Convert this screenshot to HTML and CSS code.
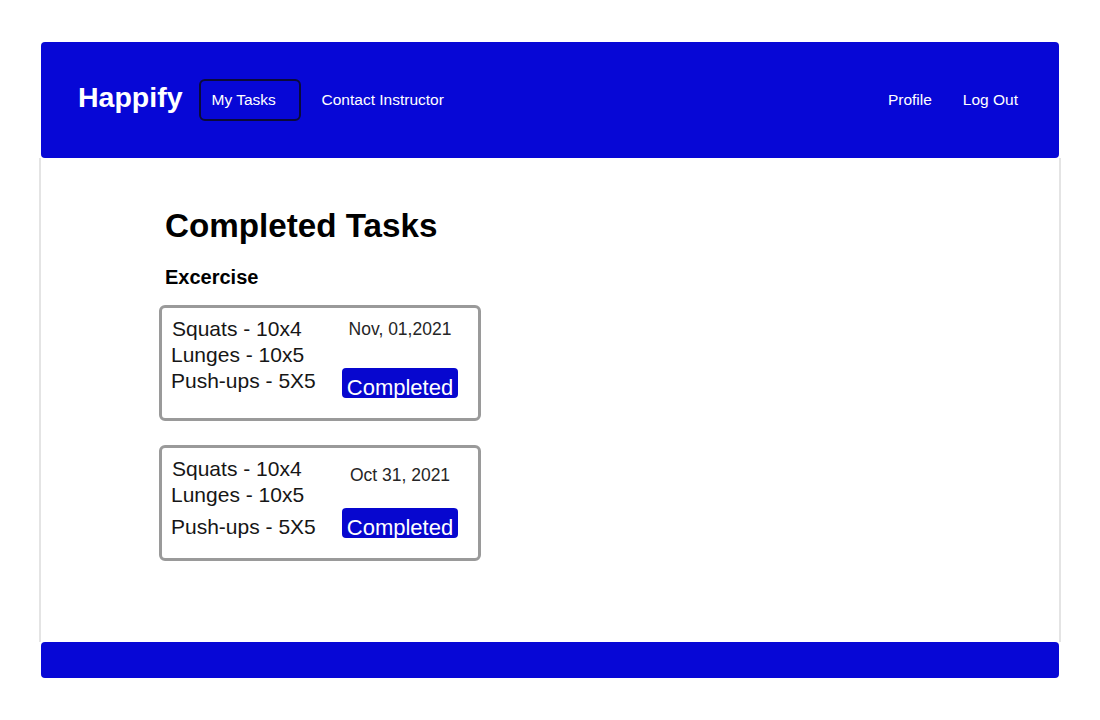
FILE: index.html
```html
<!DOCTYPE html>
<html lang="en">
<head>
<meta charset="utf-8">
<title>Happify - Completed Tasks</title>
<link rel="stylesheet" href="styles.css">
</head>
<body>
<div class="page">
  <header class="topbar">
    <div class="brand">Happify</div>
    <nav class="nav-left">
      <a class="nav-link nav-active" href="#">My Tasks</a>
      <a class="nav-link" href="#">Contact Instructor</a>
    </nav>
    <nav class="nav-right">
      <a class="nav-link" href="#">Profile</a>
      <a class="nav-link" href="#">Log Out</a>
    </nav>
  </header>
  <main class="content">
    <h1 class="title">Completed Tasks</h1>
    <h2 class="section">Excercise</h2>
    <div class="cards">
      <div class="card">
        <div class="card-list">
          <div class="item item-first">Squats - 10x4</div>
          <div class="item">Lunges - 10x5</div>
          <div class="item">Push-ups - 5X5</div>
        </div>
        <div class="card-side">
          <div class="date">Nov, 01,2021</div>
          <div class="badge">Completed</div>
        </div>
      </div>
      <div class="card">
        <div class="card-list">
          <div class="item item-first">Squats - 10x4</div>
          <div class="item">Lunges - 10x5</div>
          <div class="item item-spaced">Push-ups - 5X5</div>
        </div>
        <div class="card-side card-side-low">
          <div class="date">Oct 31, 2021</div>
          <div class="badge">Completed</div>
        </div>
      </div>
    </div>
  </main>
  <footer class="bottombar"></footer>
</div>
</body>
</html>
```

FILE: styles.css
```css
* { box-sizing: border-box; }
html, body { margin: 0; padding: 0; background: #ffffff; }
body {
  font-family: "Liberation Sans", Arial, sans-serif;
  color: #000;
}
.page {
  padding: 42px 41px;
}
.topbar {
  height: 116px;
  background: #0707d6;
  border-radius: 4px;
  display: flex;
  align-items: center;
  padding: 0 41px 0 37px;
  color: #fff;
}
.brand {
  font-size: 28.5px;
  font-weight: bold;
  margin-right: 16px;
  margin-top: -6px;
}
.nav-left, .nav-right {
  display: flex;
  align-items: center;
}
.nav-left { gap: 21px; }
.nav-right { margin-left: auto; gap: 31px; }
.nav-link {
  color: #fff;
  text-decoration: none;
  font-size: 15.5px;
  margin-top: -1px;
}
.nav-active {
  display: flex;
  align-items: center;
  width: 102px;
  height: 42px;
  padding-left: 11px;
  margin-top: 0;
  border: 2.5px solid #0a0a3a;
  border-radius: 6px;
}
.content {
  margin: 0 -2px;
  border-left: 2px solid #e4e4e4;
  border-right: 2px solid #e4e4e4;
  padding: 48px 0 81px 124px;
}
.title {
  margin: 0;
  font-size: 33.2px;
  line-height: 40px;
  font-weight: bold;
}
.section {
  margin: 19px 0 0;
  font-size: 20px;
  line-height: 24px;
  font-weight: bold;
}
.cards {
  margin-top: 16px;
  margin-left: -6px;
  display: flex;
  flex-direction: column;
  gap: 24px;
}
.card {
  width: 322px;
  height: 116px;
  border: 3px solid #9a9a9a;
  border-radius: 6px;
  display: flex;
  padding: 8px 0 0 9px;
}
.card-list {
  width: 163px;
  font-size: 21px;
  line-height: 26px;
  color: #161616;
}
.item-first { padding-left: 1px; }
.item-spaced { margin-top: 6px; }
.card-side {
  width: 132px;
  display: flex;
  flex-direction: column;
  align-items: center;
  padding-top: 3px;
}
.card-side-low { padding-top: 9px; }
.date {
  font-size: 17.5px;
  line-height: 20px;
  color: #262626;
}
.badge {
  margin-top: 29px;
  width: 116px;
  height: 30px;
  padding-top: 9px;
  background: #0707cf;
  border-radius: 4px;
  color: #fff;
  font-size: 22px;
  line-height: 22px;
  text-align: center;
}
.card-side-low .badge { margin-top: 23px; }
.bottombar {
  height: 36px;
  background: #0707d6;
  border-radius: 4px;
}
```
